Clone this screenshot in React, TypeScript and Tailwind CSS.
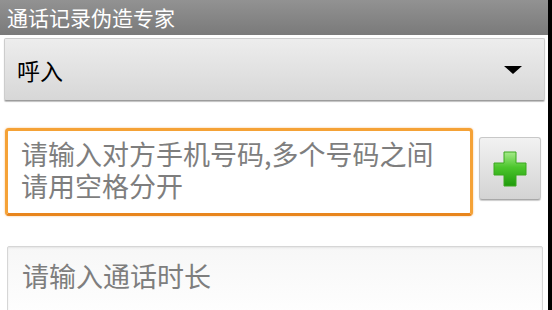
import React from "react";

const cjk = { fontFamily: '"Noto Sans CJK SC", "Noto Sans", sans-serif' };

function PlusIcon() {
  return (
    <svg width="34" height="36" viewBox="0 0 34 36">
      <defs>
        <linearGradient id="plusFill" x1="0" y1="0" x2="0" y2="1">
          <stop offset="0" stopColor="#a6ea8a" />
          <stop offset="0.45" stopColor="#4cc62c" />
          <stop offset="1" stopColor="#1f9a0c" />
        </linearGradient>
      </defs>
      <path
        d="M11 1 H23 V12 H33 V24 H23 V35 H11 V24 H1 V12 H11 Z"
        fill="url(#plusFill)"
        stroke="#3aa81f"
        strokeWidth="1"
        strokeLinejoin="round"
      />
    </svg>
  );
}

export default function App() {
  return (
    <div className="flex w-[552px] h-[310px] overflow-hidden bg-black" style={cjk}>
      <div className="w-[548px] h-full bg-white flex flex-col">
        {/* title bar */}
        <div className="h-[35px] shrink-0 bg-gradient-to-b from-[#929292] to-[#7a7a7a] pl-[7px] text-[21px] leading-[35px] text-white">
          通话记录伪造专家
        </div>

        {/* spinner */}
        <div className="mt-[3px] ml-[4px] mr-[3px] h-[63px] shrink-0 flex items-center justify-between rounded-[2px] border border-[#cdcdcd] border-b-[#9c9c9c] bg-gradient-to-b from-[#ededed] to-[#d7d7d7] pl-[12px] pr-[22px] shadow-[0_1px_1px_rgba(0,0,0,0.25)]">
          <span className="text-[23px] leading-[30px] text-black">呼入</span>
          <svg width="18" height="8" viewBox="0 0 18 8">
            <path d="M0 0 H18 L9 8 Z" fill="#000" />
          </svg>
        </div>

        {/* number input row */}
        <div className="mt-[27px] ml-[5px] mr-[7px] flex items-start gap-[6px]">
          <div className="w-[468px] h-[88px] rounded-[4px] border-[3px] border-[#f5a236] border-b-[#e8851c] bg-white pt-[7px] pl-[13px] text-[27px] leading-[32px] text-[#7e7e7e] shadow-[0_0_2px_rgba(240,140,30,0.6)]">
            <div>请输入对方手机号码,多个号码之间</div>
            <div>请用空格分开</div>
          </div>
          <button className="mt-[9px] w-[62px] h-[63px] flex items-center justify-center rounded-[3px] border border-[#c8c8c8] border-b-[#a8a8a8] bg-gradient-to-b from-[#f2f2f2] to-[#d3d3d3] shadow-[0_1px_1px_rgba(0,0,0,0.2)]">
            <PlusIcon />
          </button>
        </div>

        {/* duration input */}
        <div className="mt-[30px] ml-[7px] mr-[5px] h-[80px] shrink-0 rounded-[2px] border border-[#d6d6d6] bg-gradient-to-b from-[#f7f7f7] to-white pt-[13px] pl-[14px] text-[27px] leading-[32px] text-[#7e7e7e] shadow-[inset_0_1px_2px_rgba(0,0,0,0.08)]">
          请输入通话时长
        </div>
      </div>
    </div>
  );
}
